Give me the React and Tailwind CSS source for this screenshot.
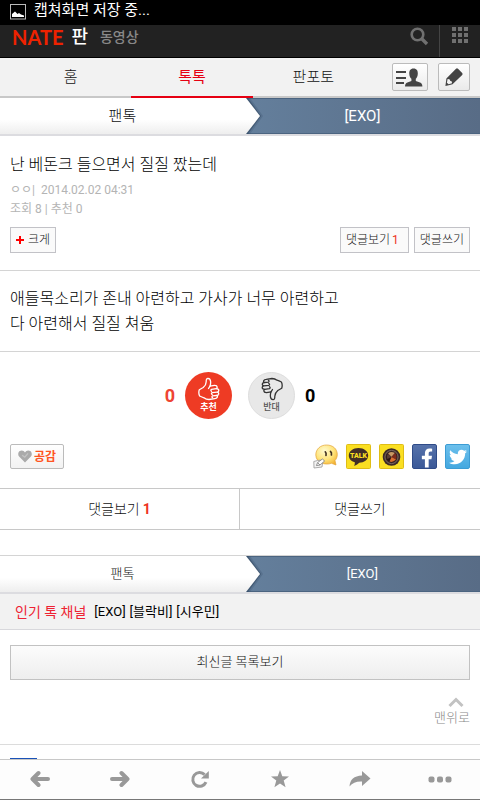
import { FaFacebookF, FaTwitter } from 'react-icons/fa';

const tabs = [
  { label: '홈', active: false },
  { label: '톡톡', active: true },
  { label: '판포토', active: false }
];

const channels = ['[EXO]', '[블락비]', '[시우민]'];

const PictureIcon = () => (
  <svg className="mt-1 h-4 w-4" viewBox="0 0 16 16" fill="none">
    <rect x="0.5" y="0.5" width="15" height="14.5" stroke="#bbb" />
    <path d="M2 13V10L5 7.5L7.5 10L9 9L11 10.5L14 11.5V13Z" fill="#fff" />
  </svg>
);

const SearchIcon = () => (
  <svg className="h-[19px] w-[19px]" viewBox="0 0 19 19" fill="none" stroke="#707070">
    <circle cx="7.5" cy="7.5" r="5.8" strokeWidth="2.6" />
    <path d="M12 12L17 17" strokeWidth="3.4" />
  </svg>
);

const GridIcon = () => (
  <svg className="h-4 w-4" viewBox="0 0 16 16" fill="#707070">
    {[0, 6, 12].map((y) => [0, 6, 12].map((x) => (
      <rect key={`${x}-${y}`} x={x} y={y} width="4" height="4" />
    )))}
  </svg>
);

const ProfileIcon = () => (
  <svg className="h-[19px] w-[27px]" viewBox="0 0 27 19" fill="#444">
    <path d="M0 3h10v2H0zM0 9h10v2H0zM0 14h8v2H0z" />
    <path d="M17.5 0.5C20.8 0.5 22 2.8 21.8 5.8C21.7 8.2 20.9 9.8 19.8 10.8V13L24 14.6C25.6 15.2 26.3 16.4 26.4 18.5H9C9.1 16.4 9.8 15.2 11.4 14.6L15.4 13V10.8C14.2 9.8 13.4 8.2 13.3 5.8C13.1 2.8 14.3 0.5 17.5 0.5Z" />
  </svg>
);

const PencilIcon = () => (
  <svg className="h-5 w-5" viewBox="0 0 20 20">
    <path d="M12 1.8Q13 0.8 14 1.8L18.2 6Q19 7 18.2 8L8.5 17.2Q4.5 18.5 1.4 19L2.4 11.5Z" fill="#444" />
    <path d="M3.6 12Q6.4 11.8 6.3 14Q8.4 13.8 8 16.2L4.6 17.2L2.9 15.8Z" fill="#f2f2f2" />
  </svg>
);

const HandIcon = ({ className }) => (
  <svg className={className} viewBox="0 0 22 23" fill="none" strokeWidth="1.3" strokeLinejoin="round" strokeLinecap="round">
    <path d="M1.6 18.5Q0.2 15.5 1.3 12.2L5.2 10Q8.2 7.5 8.2 4.2Q8 1 10 0.9Q12.4 1 12.6 4Q12.8 6.4 12 8.6L16.5 7.9Q19 7.8 19.2 9.6Q19.2 10.6 18.4 11.1Q20.8 11.3 20.8 13Q20.8 14.4 19.4 14.7Q21 15.1 20.6 16.7Q20.2 17.9 18.8 18Q19.8 18.6 19.2 19.9Q18.6 21 16.8 21.2L11 22Q8 22 6 20.3Q4 19.7 1.6 18.5Z" />
    <path d="M12 8.6L10.5 11M18.4 11.1L13.5 11.8Q12.2 12.6 13.5 13.8M19.4 14.7L14 15.2Q12.8 16.2 14.2 17M18.8 18L14.4 18.4Q13.4 19.4 14.6 20.2" />
  </svg>
);

const HeartIcon = () => (
  <svg className="h-[13px] w-[14px]" viewBox="0 0 14 13">
    <path d="M7 12.5L1.1 6.6C-0.3 5 0 2.2 1.8 1C3.6 -0.1 6 0.4 7 2.5C8 0.4 10.4 -0.1 12.2 1C14 2.2 14.3 5 12.9 6.6Z" fill="#aaa" />
    <path d="M4.2 5.2L6.8 7.2L10 3.4" fill="none" stroke="#c4c4c4" strokeWidth="1.2" />
  </svg>
);

const SmileIcon = () => (
  <svg className="h-[25px] w-[25px]" viewBox="0 0 25 25">
    <defs>
      <radialGradient id="smile" cx="0.4" cy="0.3" r="0.8">
        <stop offset="0" stopColor="#fffbd0" />
        <stop offset="0.55" stopColor="#ffe47a" />
        <stop offset="1" stopColor="#f2ae2c" />
      </radialGradient>
    </defs>
    <path d="M13.5 1C20 1 24.3 5 24.3 10.5C24.3 13 23.3 15 22 16.6L23 21L18.5 19.3C12.5 21.5 3 19 2.8 11C2.8 5 7.5 1 13.5 1Z" fill="url(#smile)" stroke="#e2a43a" strokeWidth="0.7" />
    <path d="M12.3 7.8Q13.5 8.8 13 11.4M17.5 7.5Q18.9 8.5 18.4 11" stroke="#432" strokeWidth="1.7" fill="none" strokeLinecap="round" />
    <path d="M0.8 17.5L4.5 16.5L10 16L9 23L1 24Z" fill="#f4f4f4" stroke="#999" strokeWidth="0.8" />
    <path d="M3.4 21.6L4.6 18.6L9.4 15L11.6 17L7 21Z" fill="#fff" stroke="#888" strokeWidth="0.9" />
    <path d="M4.6 18.6L7 21" fill="none" stroke="#888" strokeWidth="0.9" />
  </svg>
);

const KakaoTalkIcon = () => (
  <svg className="h-[25px] w-[25px]" viewBox="0 0 25 25">
    <rect x="0.5" y="0.5" width="24" height="24" rx="1" fill="#fadf22" stroke="#dfbd16" />
    <path d="M12.5 4C18 4 22.2 7.2 22.2 11.5C22.2 15.8 18 18.6 13.3 18.8Q11.5 20.8 8.2 22Q9 20 8.8 18.3C5 17.3 2.8 14.7 2.8 11.5C2.8 7.2 7 4 12.5 4Z" fill="#412e27" />
    <text x="12.5" y="14.2" textAnchor="middle" fontSize="7" fontWeight="900" fontFamily="Roboto, sans-serif" fill="#fadf22">TALK</text>
  </svg>
);

const KakaoStoryIcon = () => (
  <svg className="h-[25px] w-[25px]" viewBox="0 0 25 25">
    <rect x="0.5" y="0.5" width="24" height="24" rx="1" fill="#fadf22" stroke="#dfbd16" />
    <circle cx="12.5" cy="13" r="8.8" fill="#3d2a26" />
    <circle cx="12.5" cy="13" r="6.6" fill="none" stroke="#8d7a70" strokeWidth="0.8" />
    <circle cx="12.5" cy="13" r="5.2" fill="#2a1512" />
    <path d="M12.5 13L9 9.5Q12 7 16 9Z" fill="#c89a64" />
    <path d="M12.5 13L16 9Q18.5 12 17 15.5Z" fill="#7c2b1d" />
    <path d="M12.5 13L17 15.5Q14 18.8 10.5 17.6Z" fill="#d96e30" />
    <path d="M12.5 13L8.3 15Q7 12 9 9.5Z" fill="#5a3c34" />
  </svg>
);

const Breadcrumb = ({ id, className }) => (
  <nav className={`flex h-[38px] border-b-2 border-[#dcdce0] ${className}`}>
    <a href="#fan" className="relative flex w-[51%] items-center justify-center bg-linear-to-b from-white from-60% to-[#eee]">
      팬톡
      <svg className="absolute top-0 left-full z-10 h-9 w-5" viewBox="0 0 20 36">
        <defs>
          <linearGradient id={id} x1="0" y1="0" x2="0" y2="1">
            <stop offset="0.6" stopColor="#fff" />
            <stop offset="1" stopColor="#eee" />
          </linearGradient>
        </defs>
        <path d="M0 0H5L18 18L5 36H0Z" fill="#344d68" opacity="0.25" />
        <path d="M0 0H3L16 18L3 36H0Z" fill="#2b415a" opacity="0.5" />
        <path d="M0 0H1L15 18L1 36H0Z" fill={`url(#${id})`} />
      </svg>
    </a>
    <a href="#exo" className="flex flex-1 items-center justify-center border-y border-[#4b6480] bg-linear-to-r from-[#647f9c] to-[#586c86] font-normal text-white">
      [EXO]
    </a>
  </nav>
);

const BackIcon = () => (
  <svg className="h-5 w-5" viewBox="0 0 20 20" fill="none" stroke="#999" strokeWidth="4" strokeLinecap="round" strokeLinejoin="round">
    <path d="M18 9H3M8.5 3L2.5 9L8.5 15" />
  </svg>
);

const ForwardIcon = () => (
  <svg className="h-5 w-5" viewBox="0 0 20 20" fill="none" stroke="#999" strokeWidth="4" strokeLinecap="round" strokeLinejoin="round">
    <path d="M2 9H17M11.5 3L17.5 9L11.5 15" />
  </svg>
);

const ReloadIcon = () => (
  <svg className="h-5 w-5" viewBox="0 0 20 20">
    <path d="M14.6 4.6A6.9 6.9 0 1 0 16 12.2" fill="none" stroke="#999" strokeWidth="3" />
    <path d="M18.8 1V8.6H11Z" fill="#999" />
  </svg>
);

const StarIcon = () => (
  <svg className="h-5 w-5" viewBox="0 0 20 20" fill="#999">
    <path d="M10 0L12.3 6.3L19 6.5L13.7 10.6L15.6 17.2L10 13.4L4.4 17.2L6.3 10.6L1 6.5L7.7 6.3Z" />
  </svg>
);

const ShareIcon = () => (
  <svg className="h-5 w-6" viewBox="0 0 24 20" fill="#999">
    <path d="M14 1L22.5 8.5L14 16V11.5Q6 11 1.5 16.5Q2 6 14 5.5Z" />
  </svg>
);

const MoreIcon = () => (
  <svg className="h-5 w-6" viewBox="0 0 24 20" fill="#999">
    <rect x="0.5" y="6.5" width="6" height="6" rx="2" />
    <rect x="9" y="6.5" width="6" height="6" rx="2" />
    <rect x="17.5" y="6.5" width="6" height="6" rx="2" />
  </svg>
);

const toolbar = [
  { label: '뒤로', Icon: BackIcon },
  { label: '앞으로', Icon: ForwardIcon },
  { label: '새로고침', Icon: ReloadIcon },
  { label: '즐겨찾기', Icon: StarIcon },
  { label: '공유', Icon: ShareIcon },
  { label: '더보기', Icon: MoreIcon }
];

const App = () => {
  return (
    <div lang="ko" className="flex h-screen flex-col overflow-hidden bg-white font-['Roboto','Noto_Sans_CJK_KR',sans-serif] font-light text-[#111]">
      <div className="flex h-[25px] shrink-0 gap-2 overflow-hidden bg-black pl-[10px] text-[15px] leading-5 font-normal text-white">
        <PictureIcon />
        <span>캡쳐화면 저장 중...</span>
      </div>

      <main className="min-h-0 flex-1 overflow-y-auto [scrollbar-width:none]">
        <header className="flex h-[33px] border-b border-black bg-[#222] pl-3 text-white">
          <a href="#nate" className="h-6 font-['Lato',sans-serif] text-xl leading-6 font-bold text-[#ee2200]">NATE</a>
          <a href="#pann" className="ml-2 text-lg leading-6 font-medium">판</a>
          <a href="#video" className="ml-3 text-sm leading-6 font-medium text-[#888]">동영상</a>
          <button aria-label="검색" className="ml-auto h-[22px] px-[10px]"><SearchIcon /></button>
          <button aria-label="전체 메뉴" className="flex w-[41px] justify-center border-l border-[#444] pt-[2px]"><GridIcon /></button>
        </header>

        <nav className="flex h-10 border-b-2 border-[#c8c8c8] bg-[#f2f2f2] pr-[10px] pl-[10px]">
          {tabs.map((tab) => (
            <a
              key={tab.label}
              href="#tab"
              className={tab.active
                ? '-mb-[2px] flex flex-1 items-center justify-center border-b-2 border-[#e60012] text-[15px] font-normal text-[#e60012]'
                : 'flex flex-1 items-center justify-center text-[15px]'}
            >
              {tab.label}
            </a>
          ))}
          <div className="ml-[18px] flex items-center gap-[10px]">
            <button aria-label="내 정보" className="flex h-7 w-9 items-center justify-center rounded-xs border border-[#bbb] bg-linear-to-b from-white to-[#eaeaea]"><ProfileIcon /></button>
            <button aria-label="글쓰기" className="flex h-7 w-8 items-center justify-center rounded-xs border border-[#bbb] bg-linear-to-b from-white to-[#eaeaea]"><PencilIcon /></button>
          </div>
        </nav>

        <Breadcrumb id="crumb-top" className="text-[15px]" />

        <section className="border-b border-[#d4d4d4] px-[10px] pt-[17px] pb-[17px]">
          <h1 className="text-base leading-6 text-black">난 베돈크 들으면서 질질 짰는데</h1>
          <div className="mt-1 text-xs leading-[19px] font-normal text-[#b4b4b4]">
            <p>ㅇㅇ| &nbsp;2014.02.02 04:31</p>
            <p>조회 8 | 추천 0</p>
          </div>
          <div className="mt-2 flex gap-[5px] text-xs">
            <button className="mr-auto flex h-[26px] items-center gap-1 border border-[#c2c2c7] bg-[#fafafa] px-[5px]">
              <svg className="h-2 w-2" viewBox="0 0 8 8" fill="#f00"><path d="M3 0h2v3h3v2H5v3H3V5H0V3h3z" /></svg>
              크게
            </button>
            <button className="flex h-[26px] items-center gap-[2px] border border-[#c2c2c7] bg-[#fafafa] pr-[9px] pl-[5px]">
              댓글보기 <span className="font-normal text-[#ee3322]">1</span>
            </button>
            <button className="h-[26px] border border-[#c2c2c7] bg-[#fafafa] px-[5px]">댓글쓰기</button>
          </div>
        </section>

        <article className="border-b border-[#d4d4d4] px-[10px] py-[15px] text-base leading-[25px] text-black">
          <p>애들목소리가 존내 아련하고 가사가 너무 아련하고</p>
          <p>다 아련해서 질질 쳐움</p>
        </article>

        <div className="flex items-center justify-center gap-[10px] pt-5 text-lg font-bold">
          <span className="text-[#ee4433]">0</span>
          <button className="mr-[6px] flex h-[47px] w-[47px] flex-col items-center rounded-full bg-[#ee3b24] pt-[5px] text-white">
            <HandIcon className="h-6 w-[22px] stroke-white" />
            <span className="text-[9px] leading-3">추천</span>
          </button>
          <button className="flex h-[47px] w-[47px] flex-col items-center rounded-full border border-[#ddd] bg-[#e8e8e8] pt-1 text-[#555]">
            <HandIcon className="h-6 w-[22px] rotate-180 stroke-[#333]" />
            <span className="text-[9px] leading-3 font-medium">반대</span>
          </button>
          <span className="text-black">0</span>
        </div>

        <div className="mt-[25px] flex items-center gap-2 px-[10px]">
          <button className="mr-auto flex h-[25px] items-center gap-[2px] rounded-xs border border-[#bbb] bg-linear-to-b from-white to-[#f2f2f2] px-[7px] text-xs font-bold text-[#ff5522]">
            <HeartIcon />
            공감
          </button>
          <a href="#nateon" aria-label="네이트온"><SmileIcon /></a>
          <a href="#kakaotalk" aria-label="카카오톡"><KakaoTalkIcon /></a>
          <a href="#kakaostory" aria-label="카카오스토리"><KakaoStoryIcon /></a>
          <a href="#facebook" aria-label="페이스북" className="flex h-[25px] w-[25px] items-end justify-end rounded-xs border border-[#2f4b88] bg-linear-to-b from-[#5672aa] to-[#3b5998] pr-[3px] text-white">
            <FaFacebookF className="h-5 w-3" />
          </a>
          <a href="#twitter" aria-label="트위터" className="flex h-[25px] w-[25px] items-center justify-center rounded-xs border border-[#3c9cd4] bg-linear-to-b from-[#6cc0ec] to-[#44a8e0] text-white">
            <FaTwitter className="h-[18px] w-[18px]" />
          </a>
        </div>

        <div className="mt-[19px] flex h-[42px] border-y border-[#c8c8c8] text-sm">
          <a href="#comments" className="flex w-1/2 items-center justify-center gap-[3px] border-r border-[#c8c8c8]">
            댓글보기 <span className="font-bold text-[#ee3322]">1</span>
          </a>
          <a href="#write" className="flex flex-1 items-center justify-center">댓글쓰기</a>
        </div>

        <div className="mt-[25px] border-t border-[#d4d4d4]">
          <Breadcrumb id="crumb-bottom" className="text-[13px]" />
        </div>

        <div className="flex h-9 items-center gap-2 border-b border-[#d8d8dc] bg-[#f2f2f2] px-[15px]">
          <h2 className="text-sm font-normal text-[#ee2233]">인기 톡 채널</h2>
          <div className="flex gap-1 text-[13px] font-normal text-black">
            {channels.map((c) => <a key={c} href="#channel">{c}</a>)}
          </div>
        </div>

        <div className="px-[10px] pt-[15px]">
          <button className="h-[35px] w-full border border-[#c2c2c2] bg-linear-to-b from-[#fcfcfc] to-[#eee] pb-[2px] text-[13px]">최신글 목록보기</button>
          <a href="#top" className="mt-[17px] ml-auto flex w-fit flex-col items-center text-[13px] leading-5 text-[#888]">
            <svg className="-mr-2 h-[11px] w-4" viewBox="0 0 16 11" fill="none" stroke="#c2c2c2" strokeWidth="3"><path d="M1.5 9L8 2.5L14.5 9" /></svg>
            맨위로
          </a>
        </div>

        <footer className="mt-4 border-t border-[#dcdcdc] px-[10px] pt-[13px]">
          <div className="h-5 w-[27px] bg-[#1a52b8]" />
        </footer>
      </main>

      <div className="flex h-[41px] shrink-0 border-t border-b border-t-[#c8c8c8] border-b-[#777] bg-[#fdfdfd]">
        {toolbar.map(({ label, Icon }) => (
          <button key={label} aria-label={label} className="flex flex-1 items-center justify-center"><Icon /></button>
        ))}
      </div>
    </div>
  );
};

export default App;
